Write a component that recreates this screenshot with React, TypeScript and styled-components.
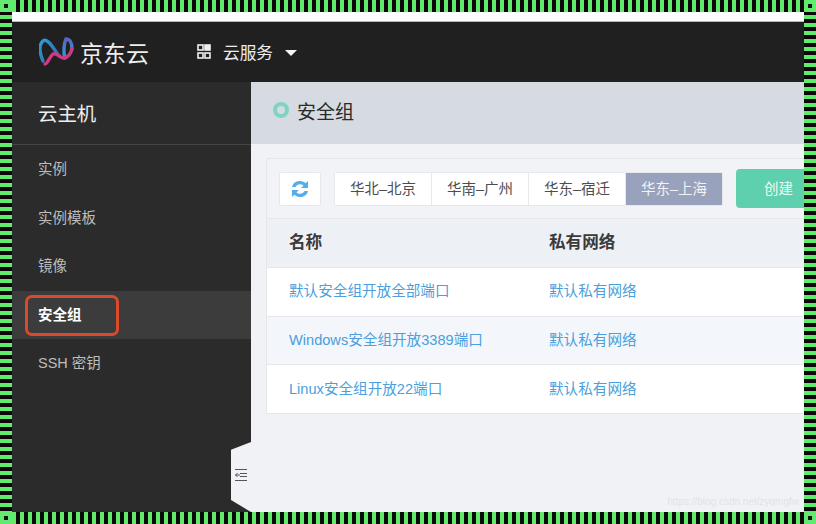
import React, { FC } from 'react'
import styled, { createGlobalStyle } from 'styled-components'

const GlobalStyle = createGlobalStyle`
  html, body {
    margin: 0;
    padding: 0;
    background: #f1f2f5;
  }
  body {
    font-family: "Liberation Sans", "Noto Sans CJK SC", sans-serif;
  }
`

const GREEN = '#62ea6c'

const Frame = styled.div`
  width: 816px;
  height: 524px;
  display: grid;
  grid-template-columns: 12px 792px 12px;
  grid-template-rows: 12px 500px 12px;
  overflow: hidden;
`

const Corner = styled.div`
  background: ${GREEN};
  display: flex;
  align-items: center;
  justify-content: center;

  &::after {
    content: '';
    width: 4px;
    height: 4px;
    background: #111;
  }
`

const HBorder = styled.div`
  background: repeating-linear-gradient(90deg, ${GREEN} 0 4px, #0a0a0a 4px 8px);
`

const VBorder = styled.div`
  background: repeating-linear-gradient(180deg, #0a0a0a 0 3px, ${GREEN} 3px 7px, #0a0a0a 7px 8px);
`

const Screen = styled.div`
  display: flex;
  flex-direction: column;
  background: #fff;
  overflow: hidden;
`

const TopStrip = styled.div`
  height: 9px;
  background: #fdfdfd;
  border-bottom: 1px solid #b9b9b9;
`

const Header = styled.header`
  height: 60px;
  flex: none;
  display: flex;
  align-items: center;
  background: #202020;
  padding-left: 27px;
  color: #f2f2f2;
`

const Brand = styled.div`
  display: flex;
  align-items: center;
  gap: 5px;
  width: 158px;
  font-size: 23px;
  color: #eee;
`

const ServiceMenu = styled.div`
  display: flex;
  align-items: center;
  font-size: 16.7px;
  color: #ececec;
  gap: 12px;
  padding-bottom: 1px;
`

const Caret = styled.span`
  width: 0;
  height: 0;
  border-left: 6px solid transparent;
  border-right: 6px solid transparent;
  border-top: 6px solid #f4f4f4;
  margin-top: 2px;
`

const Body = styled.div`
  flex: 1;
  display: flex;
  min-height: 0;
`

const Sidebar = styled.aside`
  width: 239px;
  flex: none;
  background: #2b2b2b;
  position: relative;
`

const SidebarTitle = styled.div`
  height: 63px;
  box-sizing: border-box;
  padding: 0 0 2px 26px;
  display: flex;
  align-items: center;
  font-size: 19.4px;
  color: #efefef;
  border-bottom: 1px solid #444;
`

const NavItem = styled.div<{ $active?: boolean }>`
  height: 48.5px;
  box-sizing: border-box;
  display: flex;
  align-items: center;
  padding: 0 0 3px 26px;
  font-size: 14.5px;
  color: ${({ $active }) => ($active ? '#fff' : '#bdbdbd')};
  font-weight: ${({ $active }) => ($active ? 700 : 400)};
  background: ${({ $active }) => ($active ? '#3c3c3c' : 'transparent')};
  position: relative;
`

const Highlight = styled.span`
  position: absolute;
  left: 13px;
  top: 4px;
  width: 94px;
  height: 41px;
  box-sizing: border-box;
  border: 3px solid #dc4a2c;
  border-radius: 7px;
`

const Collapse = styled.div`
  position: absolute;
  right: 0;
  bottom: 0;
  width: 20px;
  height: 70px;
  padding-bottom: 5px;
  box-sizing: border-box;
  background: #f1f2f5;
  clip-path: polygon(100% 0, 100% 100%, 0 83%, 0 11%);
  display: flex;
  align-items: center;
  justify-content: center;
`

const Main = styled.main`
  flex: 1;
  min-width: 0;
  background: #f1f2f5;
  overflow: hidden;
`

const PageHead = styled.div`
  height: 62px;
  box-sizing: border-box;
  background: #d5dbe0;
  display: flex;
  align-items: center;
  padding: 0 0 6px 22px;
  gap: 8px;
  font-size: 19px;
  color: #2a2a2a;
`

const Ring = styled.span`
  width: 16px;
  height: 16px;
  box-sizing: border-box;
  border: 4px solid #7fd3c1;
  border-radius: 50%;
`

const Card = styled.section`
  margin: 14px 0 0 15px;
  width: 560px;
  border: 1px solid #e4e6ea;
  border-right: none;
  border-radius: 3px 0 0 3px;
  background: #f2f3f6;
`

const Toolbar = styled.div`
  height: 59px;
  display: flex;
  align-items: center;
  padding-left: 12px;
`

const RefreshButton = styled.button`
  width: 42px;
  height: 34px;
  padding: 0;
  border: 1px solid #e6e8ec;
  border-radius: 2px;
  background: #fff;
  display: flex;
  align-items: center;
  justify-content: center;
  margin-right: 13px;
`

const Tabs = styled.div`
  display: flex;
  flex: none;
  width: 389px;
  height: 34px;
  box-sizing: border-box;
  border: 1px solid #e6e8ec;
  border-radius: 2px;
  background: #fff;
`

const Tab = styled.div<{ $active?: boolean }>`
  flex: 1;
  display: flex;
  align-items: center;
  justify-content: center;
  padding-bottom: 2px;
  font-size: 14.5px;
  color: ${({ $active }) => ($active ? '#f2f3f7' : '#4d4d4d')};
  background: ${({ $active }) => ($active ? '#98a2bc' : '#fff')};
  border-right: 1px solid #e6e8ec;

  &:last-child {
    border-right: none;
  }
`

const CreateButton = styled.button`
  margin-left: 13px;
  width: 90px;
  height: 39px;
  flex: none;
  padding: 0 0 2px 7px;
  border: none;
  border-radius: 4px;
  background: #5fd0ad;
  color: #eefaf6;
  font-family: inherit;
  font-size: 14.5px;
  text-align: left;
  text-indent: 21px;
`

const TableRow = styled.div<{ $head?: boolean; $shaded?: boolean }>`
  height: ${({ $head }) => ($head ? 49 : 48.7)}px;
  box-sizing: border-box;
  display: grid;
  grid-template-columns: 260px 1fr;
  align-items: center;
  padding: 0 0 4px 22px;
  font-size: ${({ $head }) => ($head ? 16.6 : 14.6)}px;
  font-weight: ${({ $head }) => ($head ? 700 : 400)};
  color: ${({ $head }) => ($head ? '#3a3a3a' : '#4a9fdc')};
  background: ${({ $head, $shaded }) => ($head ? '#edf0f5' : $shaded ? '#f3f6fb' : '#fff')};
  border-top: 1px solid #e6e8ec;
`

const Watermark = styled.div`
  position: absolute;
  right: 5px;
  bottom: 5px;
  font-size: 10px;
  color: #e2e2e6;
`

const Shell = styled.div`
  position: relative;
  flex: 1;
  display: flex;
  flex-direction: column;
  min-height: 0;
`

const Logo: FC = () => (
  <svg width="36" height="30" viewBox="0 0 36 30" fill="none" strokeLinecap="round" strokeWidth="3.4">
    <defs>
      <linearGradient id="logoRight" x1="0" y1="0" x2="0" y2="1">
        <stop offset="0" stopColor="#5a63c4" />
        <stop offset="1" stopColor="#2aa0d8" />
      </linearGradient>
      <linearGradient id="logoLeft" x1="0" y1="0" x2="1" y2="1">
        <stop offset="0" stopColor="#2a9fd0" />
        <stop offset="1" stopColor="#3a62b0" />
      </linearGradient>
    </defs>
    <path d="M4 24 C 1 17 0 9 3 5 C 6 1 10 5 13 9 L 20 19" stroke="url(#logoLeft)" />
    <path d="M26 21 C 24 15 25 6 27 2 C 31 2 33 6 33 12" stroke="url(#logoRight)" />
    <path d="M6 27 C 9 27 10 20 14 17 C 18 15 22 22 25 21 C 30 20 32 16 33 12" stroke="#cf3a86" />
  </svg>
)

const GridIcon: FC = () => (
  <svg width="14" height="15" viewBox="0 0 14 15" fill="none" stroke="#f0f0f0" strokeWidth="1.6">
    <rect x="1" y="1" width="5" height="5" />
    <rect x="8" y="1" width="5" height="5" fill="#f0f0f0" />
    <rect x="1" y="9" width="5" height="5" />
    <rect x="8" y="9" width="5" height="5" />
  </svg>
)

const RefreshIcon: FC = () => (
  <svg width="18" height="18" viewBox="0 0 18 18" fill="#55aeea">
    <path d="M1 7 C 2 3 5 1 9 1 C 11.500 1 13.500 2 14.500 3.200 L 17 1 L 17 8 L 10 8 L 12.500 5.700 C 11.500 4.700 10.500 4.200 9 4.200 C 7 4.200 5.500 5.200 4.500 7 Z" />
    <path d="M17 11 C 16 15 13 17 9 17 C 6.500 17 4.500 16 3.500 14.800 L 1 17 L 1 10 L 8 10 L 5.500 12.300 C 6.500 13.300 7.500 13.800 9 13.800 C 11 13.800 12.500 12.800 13.500 11 Z" />
  </svg>
)

const CollapseIcon: FC = () => (
  <svg width="12" height="12" viewBox="0 0 12 12" fill="none" stroke="#555" strokeWidth="1">
    <path d="M0 0.500 H12 M5 4.500 H12 M5 7.500 H12 M0 11.500 H12 M5 6 H0.500 M2.500 4 L0.500 6 L2.500 8" />
  </svg>
)

const regions = ['华北–北京', '华南–广州', '华东–宿迁', '华东–上海']

const rows = [
  { name: '默认安全组开放全部端口', net: '默认私有网络' },
  { name: 'Windows安全组开放3389端口', net: '默认私有网络', shaded: true },
  { name: 'Linux安全组开放22端口', net: '默认私有网络' },
]

const navItems = ['实例', '实例模板', '镜像', '安全组', 'SSH 密钥']

const App: FC = () => (
  <>
    <GlobalStyle />
    <Frame>
      <Corner />
      <HBorder />
      <Corner />
      <VBorder />
      <Screen>
        <TopStrip />
        <Header>
          <Brand>
            <Logo />
            京东云
          </Brand>
          <ServiceMenu>
            <GridIcon />
            云服务
            <Caret />
          </ServiceMenu>
        </Header>
        <Shell>
          <Body>
            <Sidebar>
              <SidebarTitle>云主机</SidebarTitle>
              <nav>
                {navItems.map((item) => (
                  <NavItem key={item} $active={item === '安全组'}>
                    {item}
                    {item === '安全组' && <Highlight />}
                  </NavItem>
                ))}
              </nav>
              <Collapse>
                <CollapseIcon />
              </Collapse>
            </Sidebar>
            <Main>
              <PageHead>
                <Ring />
                安全组
              </PageHead>
              <Card>
                <Toolbar>
                  <RefreshButton>
                    <RefreshIcon />
                  </RefreshButton>
                  <Tabs>
                    {regions.map((region) => (
                      <Tab key={region} $active={region === '华东–上海'}>
                        {region}
                      </Tab>
                    ))}
                  </Tabs>
                  <CreateButton>创建</CreateButton>
                </Toolbar>
                <TableRow $head>
                  <span>名称</span>
                  <span>私有网络</span>
                </TableRow>
                {rows.map((row) => (
                  <TableRow key={row.name} $shaded={row.shaded}>
                    <span>{row.name}</span>
                    <span>{row.net}</span>
                  </TableRow>
                ))}
              </Card>
            </Main>
          </Body>
          <Watermark>https://blog.csdn.net/zyqmgfw</Watermark>
        </Shell>
      </Screen>
      <VBorder />
      <Corner />
      <HBorder />
      <Corner />
    </Frame>
  </>
)

export default App
